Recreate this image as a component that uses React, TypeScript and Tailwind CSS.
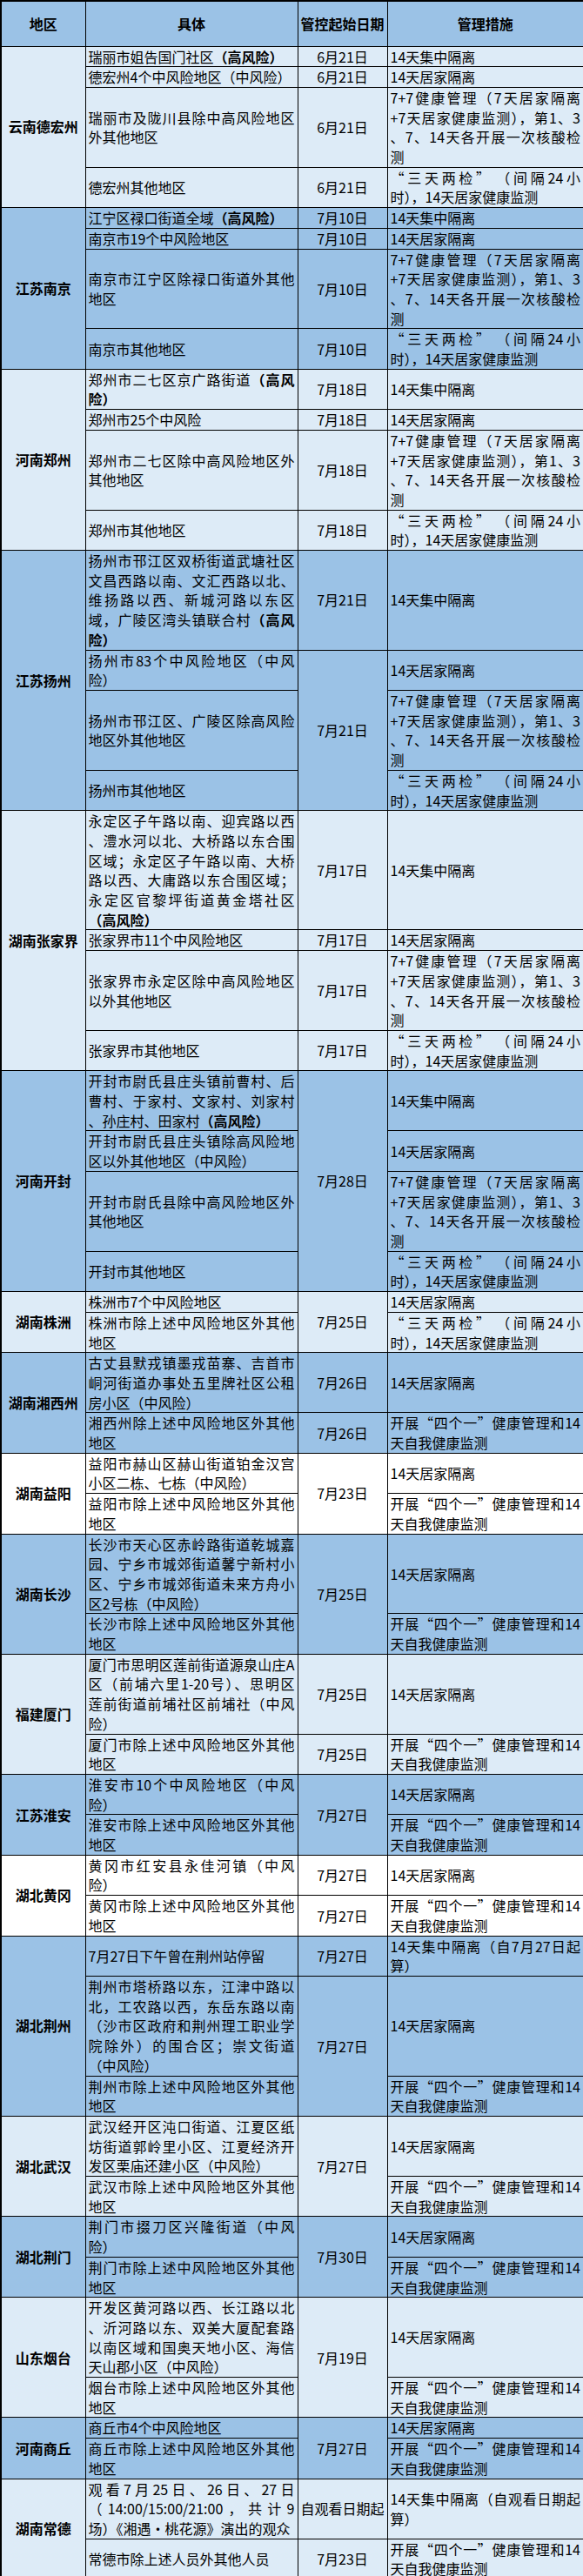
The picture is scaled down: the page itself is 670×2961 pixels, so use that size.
import React from "react";

type Row = { c2: string[]; date: string | null; span?: number; c4: string[] };
type Group = { name: string; bg: string; rows: Row[] };

const M = ["7+7健康管理（7天居家隔离", "+7天居家健康监测），第1、3", "、7、14天各开展一次核酸检", "测"];
const S = ["“三天两检” （间隔24小", "时），14天居家健康监测"];
const F = ["开展“四个一”健康管理和14", "天自我健康监测"];
const J = ["14天集中隔离"];
const H = ["14天居家隔离"];

const LIGHT = "bg-[#ddebf7]";
const MED = "bg-[#9bc2e6]";
const WHITE = "bg-white";

const groups: Group[] = [
  {
    name: "云南德宏州",
    bg: LIGHT,
    rows: [
      { c2: ["瑞丽市姐告国门社区^（高风险）^"], date: "6月21日", c4: J },
      { c2: ["德宏州4个中风险地区（中风险）"], date: "6月21日", c4: H },
      { c2: ["瑞丽市及陇川县除中高风险地区", "外其他地区"], date: "6月21日", c4: M },
      { c2: ["德宏州其他地区"], date: "6月21日", c4: S },
    ],
  },
  {
    name: "江苏南京",
    bg: MED,
    rows: [
      { c2: ["江宁区禄口街道全域^（高风险）^"], date: "7月10日", c4: J },
      { c2: ["南京市19个中风险地区"], date: "7月10日", c4: H },
      { c2: ["南京市江宁区除禄口街道外其他", "地区"], date: "7月10日", c4: M },
      { c2: ["南京市其他地区"], date: "7月10日", c4: S },
    ],
  },
  {
    name: "河南郑州",
    bg: LIGHT,
    rows: [
      { c2: ["郑州市二七区京广路街道^（高风^", "^险）^"], date: "7月18日", c4: J },
      { c2: ["郑州市25个中风险"], date: "7月18日", c4: H },
      { c2: ["郑州市二七区除中高风险地区外", "其他地区"], date: "7月18日", c4: M },
      { c2: ["郑州市其他地区"], date: "7月18日", c4: S },
    ],
  },
  {
    name: "江苏扬州",
    bg: MED,
    rows: [
      {
        c2: [
          "扬州市邗江区双桥街道武塘社区",
          "文昌西路以南、文汇西路以北、",
          "维扬路以西、新城河路以东区",
          "域，广陵区湾头镇联合村^（高风^",
          "^险）^",
        ],
        date: "7月21日",
        c4: J,
      },
      { c2: ["扬州市83个中风险地区（中风", "险）"], date: "7月21日", span: 3, c4: H },
      { c2: ["扬州市邗江区、广陵区除高风险", "地区外其他地区"], date: null, c4: M },
      { c2: ["扬州市其他地区"], date: null, c4: S },
    ],
  },
  {
    name: "湖南张家界",
    bg: LIGHT,
    rows: [
      {
        c2: [
          "永定区子午路以南、迎宾路以西",
          "、澧水河以北、大桥路以东合围",
          "区域；永定区子午路以南、大桥",
          "路以西、大庸路以东合围区域；",
          "永定区官黎坪街道黄金塔社区",
          "^（高风险）^",
        ],
        date: "7月17日",
        c4: J,
      },
      { c2: ["张家界市11个中风险地区"], date: "7月17日", c4: H },
      { c2: ["张家界市永定区除中高风险地区", "以外其他地区"], date: "7月17日", c4: M },
      { c2: ["张家界市其他地区"], date: "7月17日", c4: S },
    ],
  },
  {
    name: "河南开封",
    bg: MED,
    rows: [
      {
        c2: ["开封市尉氏县庄头镇前曹村、后", "曹村、于家村、文家村、刘家村", "、孙庄村、田家村^（高风险）^"],
        date: "7月28日",
        span: 4,
        c4: J,
      },
      { c2: ["开封市尉氏县庄头镇除高风险地", "区以外其他地区（中风险）"], date: null, c4: H },
      { c2: ["开封市尉氏县除中高风险地区外", "其他地区"], date: null, c4: M },
      { c2: ["开封市其他地区"], date: null, c4: S },
    ],
  },
  {
    name: "湖南株洲",
    bg: LIGHT,
    rows: [
      { c2: ["株洲市7个中风险地区"], date: "7月25日", span: 2, c4: H },
      { c2: ["株洲市除上述中风险地区外其他", "地区"], date: null, c4: S },
    ],
  },
  {
    name: "湖南湘西州",
    bg: MED,
    rows: [
      { c2: ["古丈县默戎镇墨戎苗寨、吉首市", "峒河街道办事处五里牌社区公租", "房小区（中风险）"], date: "7月26日", c4: H },
      { c2: ["湘西州除上述中风险地区外其他", "地区"], date: "7月26日", c4: F },
    ],
  },
  {
    name: "湖南益阳",
    bg: WHITE,
    rows: [
      { c2: ["益阳市赫山区赫山街道铂金汉宫", "小区二栋、七栋（中风险）"], date: "7月23日", span: 2, c4: H },
      { c2: ["益阳市除上述中风险地区外其他", "地区"], date: null, c4: F },
    ],
  },
  {
    name: "湖南长沙",
    bg: MED,
    rows: [
      {
        c2: ["长沙市天心区赤岭路街道乾城嘉", "园、宁乡市城郊街道馨宁新村小", "区、宁乡市城郊街道未来方舟小", "区2号栋（中风险）"],
        date: "7月25日",
        span: 2,
        c4: H,
      },
      { c2: ["长沙市除上述中风险地区外其他", "地区"], date: null, c4: F },
    ],
  },
  {
    name: "福建厦门",
    bg: LIGHT,
    rows: [
      {
        c2: ["厦门市思明区莲前街道源泉山庄A", "区（前埔六里1-20号）、思明区", "莲前街道前埔社区前埔社（中风", "险）"],
        date: "7月25日",
        c4: H,
      },
      { c2: ["厦门市除上述中风险地区外其他", "地区"], date: "7月25日", c4: F },
    ],
  },
  {
    name: "江苏淮安",
    bg: MED,
    rows: [
      { c2: ["淮安市10个中风险地区（中风", "险）"], date: "7月27日", span: 2, c4: H },
      { c2: ["淮安市除上述中风险地区外其他", "地区"], date: null, c4: F },
    ],
  },
  {
    name: "湖北黄冈",
    bg: WHITE,
    rows: [
      { c2: ["黄冈市红安县永佳河镇（中风", "险）"], date: "7月27日", c4: H },
      { c2: ["黄冈市除上述中风险地区外其他", "地区"], date: "7月27日", c4: F },
    ],
  },
  {
    name: "湖北荆州",
    bg: MED,
    rows: [
      { c2: ["7月27日下午曾在荆州站停留"], date: "7月27日", c4: ["14天集中隔离（自7月27日起", "算）"] },
      {
        c2: [
          "荆州市塔桥路以东，江津中路以",
          "北，工农路以西，东岳东路以南",
          "（沙市区政府和荆州理工职业学",
          "院除外）的围合区；崇文街道",
          "（中风险）",
        ],
        date: "7月27日",
        span: 2,
        c4: H,
      },
      { c2: ["荆州市除上述中风险地区外其他", "地区"], date: null, c4: F },
    ],
  },
  {
    name: "湖北武汉",
    bg: LIGHT,
    rows: [
      {
        c2: ["武汉经开区沌口街道、江夏区纸", "坊街道郭岭里小区、江夏经济开", "发区栗庙还建小区（中风险）"],
        date: "7月27日",
        span: 2,
        c4: H,
      },
      { c2: ["武汉市除上述中风险地区外其他", "地区"], date: null, c4: F },
    ],
  },
  {
    name: "湖北荆门",
    bg: MED,
    rows: [
      { c2: ["荆门市掇刀区兴隆街道（中风", "险）"], date: "7月30日", span: 2, c4: H },
      { c2: ["荆门市除上述中风险地区外其他", "地区"], date: null, c4: F },
    ],
  },
  {
    name: "山东烟台",
    bg: LIGHT,
    rows: [
      {
        c2: ["开发区黄河路以西、长江路以北", "、沂河路以东、双美大厦配套路", "以南区域和国奥天地小区、海信", "天山郡小区（中风险）"],
        date: "7月19日",
        span: 2,
        c4: H,
      },
      { c2: ["烟台市除上述中风险地区外其他", "地区"], date: null, c4: F },
    ],
  },
  {
    name: "河南商丘",
    bg: MED,
    rows: [
      { c2: ["商丘市4个中风险地区"], date: "7月27日", span: 2, c4: H },
      { c2: ["商丘市除上述中风险地区外其他", "地区"], date: null, c4: F },
    ],
  },
  {
    name: "湖南常德",
    bg: LIGHT,
    rows: [
      {
        c2: ["观看7月25日、26日、27日", "（14:00/15:00/21:00，共计9", "场）《湘遇·桃花源》演出的观众"],
        date: "自观看日期起",
        c4: ["14天集中隔离（自观看日期起", "算）"],
      },
      { c2: ["常德市除上述人员外其他人员"], date: "7月23日", c4: F },
    ],
  },
];

function Segs({ text }: { text: string }) {
  const parts = text.split("^");
  return (
    <>
      {parts.map((p, i) =>
        i % 2 === 1 ? (
          <span key={i} className="font-bold">
            {p}
          </span>
        ) : (
          <React.Fragment key={i}>{p}</React.Fragment>
        )
      )}
    </>
  );
}

function Lines({ lines }: { lines: string[] }) {
  return (
    <>
      {lines.map((l, i) => (
        <div
          key={i}
          className={i < lines.length - 1 ? "text-justify [text-align-last:justify]" : "text-left"}
        >
          <Segs text={l} />
        </div>
      ))}
    </>
  );
}

const cell = "border border-black align-middle px-[3px] py-0";

export default function App() {
  return (
    <div
      className="w-[670px] bg-white text-black text-[16px] leading-[22.7px]"
      style={{ fontFamily: '"Noto Sans CJK SC", "Noto Sans", sans-serif' }}
    >
      <table className="w-[670px] table-fixed border-collapse border-2 border-black">
        <colgroup>
          <col className="w-[97px]" />
          <col className="w-[244px]" />
          <col className="w-[103px]" />
          <col className="w-[226px]" />
        </colgroup>
        <thead>
          <tr className="bg-[#9bc2e6] h-[52px]">
            <th className="border border-black font-bold text-center align-middle">地区</th>
            <th className="border border-black font-bold text-center align-middle">具体</th>
            <th className="border border-black font-bold text-center align-middle whitespace-nowrap px-0">管控起始日期</th>
            <th className="border border-black font-bold text-center align-middle">管理措施</th>
          </tr>
        </thead>
        <tbody>
          {groups.map((g, gi) =>
            g.rows.map((r, ri) => (
              <tr key={`${gi}-${ri}`} className={g.bg}>
                {ri === 0 && (
                  <td rowSpan={g.rows.length} className="border border-black align-middle text-center font-bold px-0 whitespace-nowrap">
                    {g.name}
                  </td>
                )}
                <td className={cell}>
                  <Lines lines={r.c2} />
                </td>
                {r.date !== null && (
                  <td rowSpan={r.span ?? 1} className="border border-black align-middle text-center px-0 whitespace-nowrap">
                    {r.date}
                  </td>
                )}
                <td className={cell}>
                  <Lines lines={r.c4} />
                </td>
              </tr>
            ))
          )}
        </tbody>
      </table>
    </div>
  );
}
